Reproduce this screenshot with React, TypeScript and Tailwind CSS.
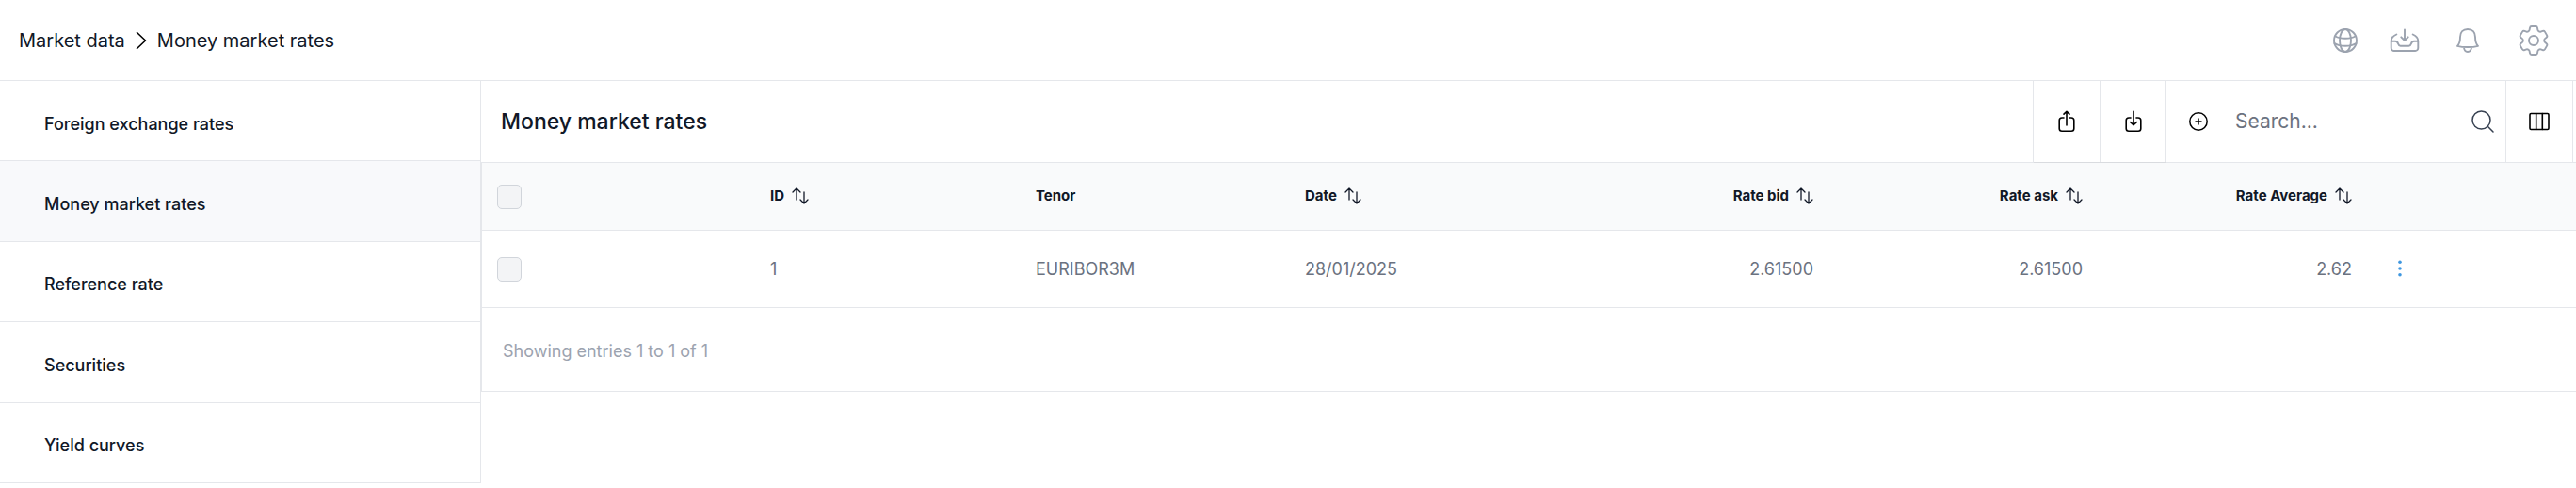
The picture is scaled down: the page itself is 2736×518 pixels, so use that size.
import type { ReactNode } from "react";

type Align = "left" | "right";

const navItems = ["Foreign exchange rates", "Money market rates", "Reference rate", "Securities", "Yield curves"];
const current = "Money market rates";

const columns: { label: string; sortable: boolean; align: Align }[] = [
  { label: "ID", sortable: true, align: "left" },
  { label: "Tenor", sortable: false, align: "left" },
  { label: "Date", sortable: true, align: "left" },
  { label: "Rate bid", sortable: true, align: "right" },
  { label: "Rate ask", sortable: true, align: "right" },
  { label: "Rate Average", sortable: true, align: "right" },
];

const rows = [["1", "EURIBOR3M", "28/01/2025", "2.61500", "2.61500", "2.62"]];

function Icon({ className, box = "0 0 32 32", width = 2, children }: { className: string; box?: string; width?: number; children: ReactNode }) {
  return (
    <svg aria-hidden="true" viewBox={box} fill="none" stroke="currentColor" strokeWidth={width} strokeLinecap="round" strokeLinejoin="round" className={`shrink-0 ${className}`}>
      {children}
    </svg>
  );
}

function SortIcon() {
  return (
    <Icon className="h-[18px] w-[18px]" box="0 0 18 18" width={1.3}>
      <path d="M5 13V1M1 5l4-4 4 4M13 5v12M9 13l4 4 4-4" />
    </Icon>
  );
}

function IconButton({ label, className, children }: { label: string; className: string; children: ReactNode }) {
  return (
    <button type="button" aria-label={label} className={`flex items-center justify-center ${className}`}>
      {children}
    </button>
  );
}

function Checkbox({ label }: { label: string }) {
  return (
    <input
      type="checkbox"
      aria-label={label}
      className="block h-[26px] w-[26px] appearance-none rounded-[5px] border border-[#d1d5db] bg-[#f3f4f6] checked:bg-[#3b82f6]"
    />
  );
}

function Header() {
  return (
    <header className="flex h-[86px] items-center justify-between border-b border-[#e5e7eb] pr-7 pl-5">
      <nav aria-label="Breadcrumb" className="flex items-center gap-[11px] text-[20px] leading-7">
        <a href="#market-data">Market data</a>
        <Icon className="h-5 w-3 text-black" box="0 0 12 20" width={1.6}>
          <path d="M1.500 1.500 10.500 10l-9 8.500" />
        </Icon>
        <a href="#money-market-rates">Money market rates</a>
      </nav>
      <div className="flex items-center gap-[35px] text-[#9ca3af]">
        <IconButton label="Language" className="h-8 w-7">
          <Icon className="h-8 w-8" width={1.9}>
            <circle cx="16" cy="16" r="12" />
            <ellipse cx="16" cy="16" rx="6" ry="12" />
            <path d="M5.500 11.500c5 3 16 3 21 0M4.500 19c5.500 3.600 17.500 3.600 23 0" />
          </Icon>
        </IconButton>
        <IconButton label="Inbox" className="h-8 w-7">
          <Icon className="h-8 w-8" width={1.9}>
            <path d="M16 4.500V16M12.300 12.300 16 16l3.700-3.700M7.300 9.500C4 11 1.700 13 1.700 16.500V24a3 3 0 0 0 3 3h22.600a3 3 0 0 0 3-3v-7.500c0-3.500-2.300-5.500-5.600-7M1.700 16.800H6c4.200 0 2 4.900 5.500 4.900h9c3.500 0 1.300-4.900 5.500-4.900h4.300" />
          </Icon>
        </IconButton>
        <IconButton label="Notifications" className="h-8 w-9">
          <Icon className="h-8 w-8" width={1.9}>
            <path d="M16 4c-5 0-8 3.200-8 8.200 0 4-.7 7.300-3 9.600 3 .8 7.200 1.200 11 1.200s8-.4 11-1.200c-2.300-2.300-3-5.600-3-9.600C24 7.200 21 4 16 4ZM12 23c0 2.800 1.600 5 4 5s4-2.200 4-5" />
          </Icon>
        </IconButton>
        <IconButton label="Settings" className="h-8 w-[34px]">
          <Icon className="h-8 w-8" box="2.4 2.4 19.2 19.2" width={1.15}>
            <path d="M9.594 3.94c.09-.542.56-.94 1.11-.94h2.593c.55 0 1.02.398 1.11.94l.213 1.281c.063.374.313.686.645.87.074.04.147.083.22.127.325.196.72.257 1.075.124l1.217-.456a1.125 1.125 0 0 1 1.37.49l1.296 2.247a1.125 1.125 0 0 1-.26 1.431l-1.003.827c-.293.241-.438.613-.43.992a7.723 7.723 0 0 1 0 .255c-.008.378.137.75.43.991l1.004.827c.424.35.534.955.26 1.43l-1.298 2.247a1.125 1.125 0 0 1-1.369.491l-1.217-.456c-.355-.133-.75-.072-1.076.124a6.47 6.47 0 0 1-.22.128c-.331.183-.581.495-.644.869l-.213 1.281c-.09.543-.56.94-1.11.94h-2.594c-.55 0-1.019-.398-1.11-.94l-.213-1.281c-.062-.374-.312-.686-.644-.87a6.52 6.52 0 0 1-.22-.127c-.325-.196-.72-.257-1.076-.124l-1.217.456a1.125 1.125 0 0 1-1.369-.49l-1.297-2.247a1.125 1.125 0 0 1 .26-1.431l1.004-.827c.292-.24.437-.613.43-.991a6.932 6.932 0 0 1 0-.255c.007-.38-.138-.751-.43-.992l-1.004-.827a1.125 1.125 0 0 1-.26-1.43l1.297-2.247a1.125 1.125 0 0 1 1.37-.491l1.216.456c.356.133.751.072 1.076-.124.072-.044.146-.086.22-.128.332-.183.582-.495.644-.869l.214-1.28Z" />
            <circle cx="12" cy="12" r="3" />
          </Icon>
        </IconButton>
      </div>
    </header>
  );
}

function Sidebar() {
  return (
    <nav aria-label="Market data" className="w-[511px] shrink-0 border-r border-[#e5e7eb]">
      <ul className="grid h-[427px] grid-rows-5">
        {navItems.map((item) => (
          <li key={item} className={`border-b border-[#e5e7eb] ${item === current ? "bg-[#f8f9fb]" : ""}`}>
            <a href="#section" aria-current={item === current ? "page" : undefined} className="flex h-full items-center px-[47px] pt-[7px] text-[18px] leading-7 font-medium">
              {item}
            </a>
          </li>
        ))}
      </ul>
    </nav>
  );
}

function Toolbar() {
  return (
    <div className="flex h-[86px] items-stretch justify-between pr-[3px]">
      <h1 className="flex items-center pl-[21px] text-[23px] leading-8 font-medium">{current}</h1>
      <div className="flex items-stretch divide-x divide-[#e5e7eb] border-x border-[#e5e7eb] text-black">
        <IconButton label="Export" className="w-[71px] shadow-2xs">
          <Icon className="h-6 w-6" box="0 0 24 24" width={1.6}>
            <path d="M12 16V1.500M9 4.200l3-2.900 3 2.900M9 8H7a2.800 2.800 0 0 0-2.800 2.800v8.700A2.800 2.800 0 0 0 7 22.300h10a2.800 2.800 0 0 0 2.800-2.800v-8.700A2.800 2.800 0 0 0 17 8h-2" />
          </Icon>
        </IconButton>
        <IconButton label="Import" className="w-[70px] shadow-2xs">
          <Icon className="h-6 w-6" box="0 0 24 24" width={1.6}>
            <path d="M12 1.300v14.500M8.700 12.600l3.300 3.200 3.300-3.200M9 8H7a2.800 2.800 0 0 0-2.800 2.800v8.700A2.800 2.800 0 0 0 7 22.300h10a2.800 2.800 0 0 0 2.800-2.800v-8.700A2.800 2.800 0 0 0 17 8h-2" />
          </Icon>
        </IconButton>
        <IconButton label="Add" className="w-[68px]">
          <Icon className="h-6 w-6" box="0 0 24 24" width={1.5}>
            <circle cx="12" cy="12" r="9.200" />
            <path d="M12 9v6M9 12h6" />
          </Icon>
        </IconButton>
        <div className="flex w-[293px] items-center pr-3 pl-[5px]">
          <input type="search" aria-label="Search" placeholder="Search..." className="min-w-0 flex-1 bg-transparent text-[21px] leading-8 outline-none placeholder:text-[#6b7280]" />
          <IconButton label="Run search" className="h-6 w-6 text-[#374151]">
            <Icon className="h-6 w-6" box="0 0 24 24" width={1.5}>
              <circle cx="10.500" cy="10.500" r="9.500" />
              <path d="m17.300 17.300 5.700 5.700" />
            </Icon>
          </IconButton>
        </div>
        <IconButton label="Columns" className="w-[70px]">
          <Icon className="h-6 w-6" box="0 0 24 24" width={1.6}>
            <rect x="2" y="3.500" width="20" height="17" rx="1.200" />
            <path d="M8.700 3.500v17M15.300 3.500v17" />
          </Icon>
        </IconButton>
      </div>
    </div>
  );
}

function RatesTable() {
  return (
    <div className="border-y border-l border-[#e5e7eb]">
      <table className="w-full table-fixed border-separate border-spacing-0">
        <colgroup>
          <col className="w-[282px]" />
          <col className="w-[282px]" />
          <col className="w-[286px]" />
          <col className="w-[286px]" />
          <col className="w-[286px]" />
          <col className="w-[286px]" />
          <col className="w-[286px]" />
          <col className="w-[230px]" />
        </colgroup>
        <thead className="bg-[#f9fafb] text-[15px] leading-6">
          <tr className="h-[72px]">
            <th scope="col" className="border-b border-[#e5e7eb] px-4">
              <Checkbox label="Select all rows" />
            </th>
            {columns.map((column) => (
              <th key={column.label} scope="col" className={`border-b border-[#e5e7eb] pr-2 pb-[2px] pl-6 font-bold ${column.align === "right" ? "text-right" : "text-left"}`}>
                {column.sortable ? (
                  <button type="button" className="inline-flex items-center gap-2 align-middle">
                    {column.label}
                    <SortIcon />
                  </button>
                ) : (
                  column.label
                )}
              </th>
            ))}
            <td className="border-b border-[#e5e7eb]" />
          </tr>
        </thead>
        <tbody className="text-[18px] leading-7 text-[#6b7280]">
          {rows.map((row) => (
            <tr key={row[0]} className="h-[82px]">
              <td className="border-b border-[#e5e7eb] px-4">
                <Checkbox label={`Select row ${row[0]}`} />
              </td>
              {row.map((value, index) => (
                <td key={columns[index].label} className={`border-b border-[#e5e7eb] pr-2 pl-6 ${columns[index].align === "right" ? "text-right" : "text-left"}`}>
                  {value}
                </td>
              ))}
              <td className="border-b border-[#e5e7eb] pl-[31px]">
                <IconButton label="Row actions" className="h-6 w-6 text-[#3f97e0]">
                  <svg aria-hidden="true" viewBox="0 0 24 24" fill="currentColor" className="h-6 w-6">
                    <circle cx="12" cy="4.300" r="1.800" />
                    <circle cx="12" cy="11" r="1.800" />
                    <circle cx="12" cy="17.700" r="1.800" />
                  </svg>
                </IconButton>
              </td>
            </tr>
          ))}
        </tbody>
      </table>
      <p className="px-[22px] pt-8 pb-7 text-[18px] leading-7 text-[#9ca3af]">Showing entries 1 to 1 of 1</p>
    </div>
  );
}

export default function App() {
  return (
    <div className="min-h-screen bg-white font-['Inter','Liberation_Sans',sans-serif] text-[#111827]">
      <Header />
      <div className="flex items-start">
        <Sidebar />
        <main className="min-w-0 flex-1">
          <Toolbar />
          <RatesTable />
        </main>
      </div>
    </div>
  );
}
